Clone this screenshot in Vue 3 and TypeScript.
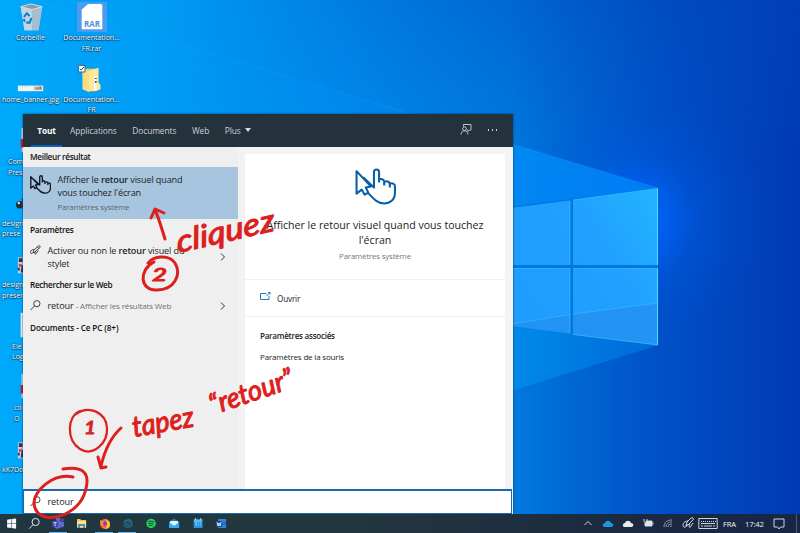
<script setup lang="ts">
interface DesktopItem {
  kind: string
  lines: string[]
  indent: number
}

const files: DesktopItem[] = [
  { kind: 'pdf', lines: ['Com', 'Pres'], indent: 8 },
  { kind: 'ball', lines: ['design', 'prese'], indent: 2 },
  { kind: 'photo', lines: ['design', 'préser'], indent: 2 },
  { kind: 'page', lines: ['Ele', 'Log'], indent: 12 },
  { kind: 'pdf', lines: ['co', 'O'], indent: 14 },
  { kind: 'photo', lines: ['kK7Do'], indent: 2 },
]
const tabs: string[] = ['Applications', 'Documents', 'Web']
</script>

<template>
  <main class="desktop">
    <svg class="wallpaper" viewBox="0 0 800 533" preserveAspectRatio="none">
      <defs>
        <linearGradient id="base" x1="0" y1="0" x2="1" y2="0">
          <stop offset="0" stop-color="#00a7fa" />
          <stop offset=".2" stop-color="#009cf4" />
          <stop offset=".42" stop-color="#008cee" />
          <stop offset=".64" stop-color="#007adf" />
          <stop offset=".72" stop-color="#0066d3" />
          <stop offset=".83" stop-color="#004fc7" />
          <stop offset="1" stop-color="#003ab5" />
        </linearGradient>
        <linearGradient id="topShade" x1="0" y1="0" x2="0" y2="1">
          <stop offset="0" stop-color="#0046b8" stop-opacity=".36" />
          <stop offset="1" stop-color="#0050c8" stop-opacity="0" />
        </linearGradient>
        <linearGradient id="fadeLeft" x1="0" y1="0" x2="1" y2="0">
          <stop offset=".2" stop-color="#fff" stop-opacity="0" />
          <stop offset=".65" stop-color="#fff" stop-opacity="1" />
        </linearGradient>
        <mask id="rightOnly"><rect width="800" height="533" fill="url(#fadeLeft)" /></mask>
        <radialGradient id="glow" gradientUnits="userSpaceOnUse" cx="635" cy="220" r="130">
          <stop offset="0" stop-color="#006aff" />
          <stop offset=".25" stop-color="#0062f8" stop-opacity=".75" />
          <stop offset=".5" stop-color="#005ae6" stop-opacity=".32" />
          <stop offset="1" stop-color="#0050d0" stop-opacity="0" />
        </radialGradient>
        <linearGradient id="beam" gradientUnits="userSpaceOnUse" x1="0" y1="0" x2="658" y2="0">
          <stop offset="0" stop-color="#00adff" stop-opacity=".4" />
          <stop offset=".35" stop-color="#0096f4" stop-opacity=".15" />
          <stop offset=".6" stop-color="#0090fa" stop-opacity=".25" />
          <stop offset=".8" stop-color="#008efc" stop-opacity=".75" />
          <stop offset="1" stop-color="#0082f6" stop-opacity=".85" />
        </linearGradient>
        <linearGradient id="under" gradientUnits="userSpaceOnUse" x1="512" y1="0" x2="658" y2="0">
          <stop offset="0" stop-color="#008aea" />
          <stop offset="1" stop-color="#0068d8" />
        </linearGradient>
        <linearGradient id="pane" gradientUnits="userSpaceOnUse" x1="512" y1="300" x2="658" y2="210">
          <stop offset="0" stop-color="#1e9dff" />
          <stop offset=".6" stop-color="#21a0ff" />
          <stop offset="1" stop-color="#22b2ff" />
        </linearGradient>
      </defs>
      <rect width="800" height="533" fill="url(#base)" />
      <rect width="800" height="170" fill="url(#topShade)" mask="url(#rightOnly)" />
      <rect x="500" y="90" width="300" height="270" fill="url(#glow)" />
      <path d="M0-10 658 188V345L430 415 0 533Z" fill="url(#beam)" />
      <path d="M0-10 658 188" stroke="#41b7ff" stroke-opacity=".16" fill="none" />
      <path d="M505 325 658 345 505 393Z" fill="url(#under)" />
      <path d="M505 207 658 188V345L505 325Z" fill="#0077e2" />
      <path d="M505 208.500 570 200.500V265H505ZM573 200 658 188.500V265H573ZM505 268.500H570V333.500L505 325ZM573 268.500H658V345L573 334.500Z" fill="url(#pane)" />
      <path d="M505 325 570 314.500V333.500ZM573 314 658 303V345L573 334.500Z" fill="#248fef" fill-opacity=".72" />
      <path d="M505 325 570 314.500M573 314 658 303" stroke="#31b4ff" fill="none" stroke-opacity=".8" />
      <path d="M573 200 657.500 188.500V265M570 200.500V265M505 268.500H570M573 268.500H657.500V345L573 334.500M570 268.500V333.500" stroke="#42c7ff" stroke-width="1" fill="none" stroke-opacity=".6" />
      <path d="M657.500 188.500V265M657.500 268.500V345" stroke="#4be0ff" fill="none" />
    </svg>

    <section class="icons">
      <div class="shortcut">
        <svg class="pic" viewBox="0 0 32 32">
          <path d="M5 5 16 2 28 5 24 30H9Z" fill="#a8c9dd" />
          <path d="M5 5 17 8 17 30H9Z" fill="#c0d6e4" />
          <path d="M17 8 28 5 24 30H17Z" fill="#a3bfd0" />
          <path d="M5 5 16 2 28 5 17 8Z" fill="#879cab" stroke="#d3e0e8" />
          <path d="m8.500 16 3-4 3 3M16.500 17l-2 5h-3.500M9.500 21l-1.500-3" fill="none" stroke="#147dcb" stroke-width="2.200" />
        </svg>
        <span class="name">Corbeille</span>
      </div>
      <div class="shortcut">
        <svg class="pic selected" viewBox="0 0 32 32">
          <path d="M5 8 12 2H25Q27 2 27 4V29H5Z" fill="#fff" />
          <text x="16" y="26.500" text-anchor="middle" class="rar">RAR</text>
        </svg>
        <span class="name">Documentation...<br>FR.rar</span>
      </div>
      <div class="shortcut">
        <svg class="pic" viewBox="0 0 32 32">
          <path d="M2 23H29V29H2Z" fill="#f4f4ef" /><path d="M19 24H28V28H19Z" fill="#c8b8a8" />
          <path d="M22 25h2v2h-2zM25 24h2v3h-2z" fill="#8d7a72" /><path d="M3 24h12v1H3z" fill="#d8e0e3" />
        </svg>
        <span class="name">home_banner.jpg</span>
      </div>
      <div class="shortcut">
        <svg class="pic" viewBox="0 0 32 32">
          <path d="M6 5H22V26L12 29 6 27Z" fill="#f0cd62" /><path d="M11 8 23 4V20L25 22V27L20 29H11Z" fill="#ffe89a" />
          <path d="M6 5 13 8V30L6 27Z" fill="#f9dc83" /><path d="M18 12H21V28H18Z" fill="#f6f6f0" />
          <path d="M19 15h2v1h-2zm0 3h2v2h-2z" fill="#454c52" />
          <path d="M1.500 1.500H8.500V8.500H1.500Z" fill="#fff" stroke="#25668c" /><path d="m3 5 1.500 1.500L7.500 3" fill="none" stroke="#333" />
        </svg>
        <span class="name">Documentation...<br>FR</span>
      </div>
      <template v-for="(file, i) in files" :key="i">
        <div class="shortcut cut">
          <svg class="pic" viewBox="0 0 32 32">
            <g v-if="file.kind === 'pdf'"><path d="M6 3H28V29H6Z" fill="#f4f4f4" /><path d="M5 15H28V24H5Z" fill="#d1142a" /></g>
            <g v-else-if="file.kind === 'ball'"><circle cx="4" cy="19" r="4" fill="#252b33" /><circle cx="3" cy="17" r="1.300" fill="#dce6ed" /><path d="M6 12h5v12H7z" fill="#25465f" /></g>
            <g v-else-if="file.kind === 'photo'"><path d="M2 10H28V27H2Z" fill="#d2cdd8" /><path d="M3 11h4v4H3zm3 7h3v8H5zM2 21h2v3H2z" fill="#2c315f" /><path d="M3 17h3v3H3z" fill="#b94c58" /></g>
            <g v-else><path d="M5 3H28V29H5Z" fill="#f5f5f5" /><path d="M7 7h1v1H7zm0 10h1v1H7z" fill="#999" /></g>
          </svg>
          <span class="name" :style="{ paddingLeft: file.indent + 'px' }"><template v-for="(line, n) in file.lines" :key="n">{{ line }}<br></template></span>
        </div>
        <i></i>
      </template>
    </section>

    <section class="search-window">
      <header class="tabs">
        <b class="tab active">Tout</b>
        <span v-for="tab in tabs" :key="tab" class="tab">{{ tab }}</span>
        <span class="tab more">Plus <i class="caret"></i></span>
        <svg class="feedback" viewBox="0 0 12 12"><path d="M3.500 3V1H11V6.500H9.500L8 8V6.500H7" /><circle cx="4.500" cy="5.300" r="1.900" /><path d="M1 11c.3-5 6.500-5 7 0" /></svg>
        <span class="dots"><i></i><i></i><i></i></span>
      </header>
      <div class="body">
        <div class="results">
          <h3 class="h-first">Meilleur résultat</h3>
          <div class="best">
            <svg class="touch" viewBox="0 0 40 36"><path d="M1.500 3V25L6.500 21 9.500 26 13 24 10.500 19 15.500 18ZM8 9 18.500 19V4C18.500 .5 23.500 .5 23.500 4V14M23.500 11.500C25 10 28.500 11 28.500 13.500V17M28.500 14C30 12 34 13 34 16V19M34 15.500C36 14 39 15.500 39 18V24C39 31 34 34.500 28.500 34.500C22 34.500 19 31 12.500 24" /></svg>
            <div class="best-copy"><p>Afficher le <b>retour</b> visuel quand<br>vous touchez l'écran</p><small>Paramètres système</small></div>
          </div>
          <h3 class="h-settings">Paramètres</h3>
          <div class="row two">
            <svg class="glyph" viewBox="0 0 12 12"><path d="M4 6 9 1C10.500 0 12 2 10.500 3L5 8 3.500 8ZM5 5c-4-1-5 3-4 4s3-1 3-2M6 7c-2 3 0 4 1 2l2-3M8 2l2 2" /></svg>
            <p>Activer ou non le <b>retour</b> visuel du<br>stylet</p><svg class="chev" viewBox="0 0 6 8"><path d="m1 .5 3.500 3.500L1 7.500" /></svg>
          </div>
          <h3 class="h-web">Rechercher sur le Web</h3>
          <div class="row one">
            <svg class="glyph" viewBox="0 0 12 12"><circle cx="7.500" cy="4" r="3.400" /><path d="M5 6.500.5 11" /></svg>
            <p>retour <em>- Afficher les résultats Web</em></p><svg class="chev" viewBox="0 0 6 8"><path d="m1 .5 3.500 3.500L1 7.500" /></svg>
          </div>
          <h3 class="h-docs">Documents - Ce PC (8+)</h3>
        </div>
        <article class="preview">
          <div class="hero">
            <svg class="touch big" viewBox="0 0 40 36"><path d="M1.500 3V25L6.500 21 9.500 26 13 24 10.500 19 15.500 18ZM8 9 18.500 19V4C18.500 .5 23.500 .5 23.500 4V14M23.500 11.500C25 10 28.500 11 28.500 13.500V17M28.500 14C30 12 34 13 34 16V19M34 15.500C36 14 39 15.500 39 18V24C39 31 34 34.500 28.500 34.500C22 34.500 19 31 12.500 24" /></svg>
            <h2>Afficher le retour visuel quand vous touchez<br>l'écran</h2>
            <small>Paramètres système</small>
          </div>
          <div class="open"><svg viewBox="0 0 11 9"><path d="M6.500 1.500H.5V7.500H9V4M6.500 4 10 .5M8 .5h2v2" /></svg><span>Ouvrir</span></div>
          <div class="related"><b>Paramètres associés</b><span>Paramètres de la souris</span></div>
        </article>
      </div>
      <div class="searchbox"><svg class="glyph" viewBox="0 0 12 12"><circle cx="7.500" cy="4" r="3.400" /><path d="M5 6.500.5 11" /></svg><span>retour</span></div>
    </section>

    <footer class="taskbar">
      <svg class="t" viewBox="0 0 23 19"><path d="m7 5.700 4-.6v4.200H7zm4.500-.7 4.500-.6v4.900h-4.500zM7 9.800h4V14l-4-.6zm4.500 0H16v4.900l-4.500-.6z" fill="#f4f8fa" /></svg>
      <svg class="t" viewBox="0 0 23 19"><circle cx="12.500" cy="8" r="3.600" fill="none" stroke="#e1e8ea" /><path d="m10 10.700-4 4" stroke="#e1e8ea" /></svg>
      <svg class="t run" viewBox="0 0 23 19"><path d="M7 7h8v5c0 3-7 4-7 0zM14 8h4v3c0 2-2 3-4 2" fill="#6468cc" /><circle cx="12" cy="5" r="2.300" fill="#6468cc" /><circle cx="16.300" cy="6" r="1.500" fill="#4e53bd" /><path d="M6 7h6v6H6z" fill="#414ab7" /><path d="M7.500 8.500h3M9 8.500v3.500" stroke="#c9cdf2" /></svg>
      <svg class="t" viewBox="0 0 23 19"><path d="M7 5h3l1 1h5v8H7z" fill="#f5bd45" /><path d="M7 7h9v6H7z" fill="#ffe393" /><path d="M8 10h7v4h-2v-2h-3v2H8z" fill="#408fc8" /></svg>
      <svg class="t run" viewBox="0 0 23 19"><circle cx="12" cy="10" r="5" fill="#ff6540" /><path d="M11 4c1 2 6 2 6 7 0 3-3 4-5 4 3-3 3-7-1-11" fill="#ffc52d" /><circle cx="11.500" cy="9.500" r="2.300" fill="#7549bc" /><path d="m7 6 4 2-2 1 2 2c-2 1-4-1-4-5" fill="#ff9b2f" /></svg>
      <svg class="t run" viewBox="0 0 23 19"><circle cx="12" cy="9.500" r="5" fill="#23495a" /><circle cx="12" cy="9.500" r="4.200" fill="none" stroke="#24708c" stroke-dasharray="5 1.500" /><path d="M9 8c2-3 6-1 6 2M9 11c2-3 4 1 4 2" stroke="#2b7791" fill="none" /></svg>
      <svg class="t" viewBox="0 0 23 19"><circle cx="12" cy="9.500" r="4.700" fill="#25d465" /><path d="M9 7.500q3-1 6 .5M9.300 9.600q2.700-.8 5.200.5M9.600 11.500q2-.6 4 .4" stroke="#173c35" fill="none" /></svg>
      <svg class="t" viewBox="0 0 23 19"><path d="M7 8 12 4.500 17 8V14H7Z" fill="#1684d0" /><path d="M8 7h8v3l-4 2-4-2z" fill="#edf6fb" /><path d="m7 8 5 4 5-4v6H7z" fill="#32aef0" /></svg>
      <svg class="t" viewBox="0 0 23 19"><path d="M7.500 5H16.500V14H7.500Z" fill="#2693df" /><path d="M8 7h8M9.500 4v2M14.500 4v2M9 9h2m1 0h1m1 0h1M9 11h2m1 0h1m1 0h1" stroke="#c3ebff" stroke-width=".8" /></svg>
      <svg class="t" viewBox="0 0 23 19"><path d="M9 5h8v9H9z" fill="#2d87d6" /><path d="M9 8h8v3H9z" fill="#2869bd" /><path d="M7 7h6v6H7z" fill="#164ca5" /><path d="m8 8 1 4 1-3 1 3 1-4" stroke="#fff" fill="none" stroke-width=".8" /></svg>
      <div class="tray">
        <svg viewBox="0 0 20 19"><path d="m6.500 11 3.500-3.500 3.500 3.500" /></svg>
        <svg viewBox="0 0 20 19"><path class="cloud blue" d="M6 13c-2-1-1-4 1-4 1-3 5-3 6 0 3 0 3 4 0 4z" /></svg>
        <svg viewBox="0 0 20 19"><path class="cloud" d="M6 13c-2-1-1-4 1-4 1-3 5-3 6 0 3 0 3 4 0 4z" /></svg>
        <svg viewBox="0 0 20 19"><path d="M8 7h6v5H7V9M15 8.500v2" fill="#dce4ed" /><path d="M6 5v2c0 2 3 2 3 0V5M7.500 8v4" /></svg>
        <svg viewBox="0 0 20 19"><path class="dim" d="M6 13c0-5 3-7 8-7M8 13c0-3 2-5 6-5M10 13c0-2 1-3 4-3M12 13c0-1 1-1 2-1" /></svg>
        <svg viewBox="0 0 20 19"><path d="m9 8 4-4c2-1 3 1 2 2l-5 5-2 1zm1-1c-5 0-6 5-4 6s3-2 3-3M12 10c-2 3 0 5 1 2l2-3" /></svg>
        <svg viewBox="0 0 20 19"><path d="M.8 4.500H19.200V14.500H.8ZM3 7.500h1m1 0h1m1 0h1m1 0h1m1 0h1m1 0h1m1 0h1m1 0h1M3 9.500h14M3 12h2m1 0h8m1 0h2" /></svg>
        <span class="lang">FRA</span><span class="clock">17:42</span>
        <svg class="note" viewBox="0 0 20 19"><path d="M5 5H15V13H11.500L10 15 8.500 13H5Z" /></svg><i class="peek"></i>
      </div>
    </footer>

    <svg class="ink" viewBox="0 0 800 533">
      <g class="stroke">
        <path d="M165 239C162 230 159 218 155 210M151 218 155 209 164 213" />
        <path d="M154 262C138 270 140 291 157 290C174 290 182 275 175 263C169 254 153 256 148 263" />
        <path class="thin" d="M80 411C67 416 66 440 80 449C93 457 108 443 107 428C106 412 89 405 76 414" />
        <path d="M121 428C112 436 105 449 101 466M98 457 101 468 106 467" />
        <path d="M73 477C53 473 33 491 34 504C37 527 75 518 84 495C92 473 84 466 63 469" />
      </g>
      <g class="hand">
        <text transform="translate(178 253) rotate(-13) skewX(-6)" font-size="31" textLength="100" lengthAdjust="spacingAndGlyphs">cliquez</text>
        <text transform="translate(134 437) rotate(-10)" font-size="29" textLength="62" lengthAdjust="spacingAndGlyphs">tapez</text>
        <text transform="translate(213 415) rotate(-19)" font-size="28" textLength="87" lengthAdjust="spacingAndGlyphs">“retour”</text>
        <text x="152" y="281" font-size="17" textLength="15" lengthAdjust="spacingAndGlyphs">2</text>
        <text x="84" y="434" font-size="17" textLength="12" lengthAdjust="spacingAndGlyphs">1</text>
      </g>
    </svg>
  </main>
</template>

<style>
body { overflow: hidden; }
</style>

<style scoped>
.desktop { position: relative; width: 800px; height: 533px; display: flex; flex-direction: column; justify-content: space-between; overflow: hidden; font-family: "Open Sans", "Noto Sans", sans-serif; color: #1d1d1d; font-size: 9px; }
.desktop * { box-sizing: border-box; }
svg { display: block; flex: none; }
p, h2, h3 { margin: 0; }
.wallpaper, .ink { position: absolute; inset: 0; width: 800px; height: 533px; pointer-events: none; }
.ink { z-index: 4; }
.icons { position: relative; display: grid; grid-template-columns: 61px 61px; grid-auto-rows: 61.500px; width: 122px; height: 514px; overflow: hidden; }
.shortcut { display: flex; flex-direction: column; align-items: center; padding-top: 2px; color: #fff; }
.pic { width: 30px; height: 30px; }
.selected { background: #4b9cee; }
.name { font-size: 7px; line-height: 10.500px; text-align: center; white-space: nowrap; padding-top: 1px; text-shadow: 0 1px 1px #003c66, 0 0 2px #00466f, 0 0 1px #00466f; }
.cut .name { align-self: flex-start; text-align: left; padding-top: 2px; }
.rar { font: 700 8.500px "Open Sans", sans-serif; fill: #4c94d5; }
.search-window { position: absolute; z-index: 2; left: 23px; top: 114px; width: 489.500px; height: 400px; display: flex; flex-direction: column; background: #f4f4f4; box-shadow: 0 0 2px #00396f; }
.tabs { height: 33px; background: #24323c; color: #ccd1d4; display: flex; align-items: stretch; padding-left: 8px; }
.tab { display: flex; align-items: center; font-size: 8.400px; letter-spacing: -.08px; margin-right: 15.500px; padding-bottom: 1px; white-space: nowrap; }
.tab.active { width: 31px; justify-content: center; border-bottom: 2px solid #0a64b8; padding-top: 1px; padding-bottom: 0; margin-right: 8px; color: #fff; font-size: 8.400px; letter-spacing: -.2px; }
.tab.more { margin: 0; gap: 4px; }
.caret { border: 3.500px solid transparent; border-top: 4px solid #d5dade; border-bottom: 0; }
.feedback { width: 12px; height: 31px; margin: 0 16px 0 auto; fill: none; stroke: #cbd2d5; stroke-width: .9; }
.dots { display: flex; gap: 2.500px; align-items: center; margin-right: 15.500px; padding-bottom: 1px; }
.dots i { width: 1.500px; height: 1.500px; background: #ccd4d7; }
.body { display: flex; height: 342px; }
.results { width: 222px; background: #efefef; border-right: 7px solid #f2f2f2; }
h3 { display: flex; align-items: center; padding: 0 0 1px 7px; font-size: 8.200px; letter-spacing: -.26px; font-weight: 600; color: #111; white-space: nowrap; }
.h-first { height: 20px; letter-spacing: -.3px; }
.h-settings { height: 22px; }
.h-web { height: 21px; padding-bottom: 2px; letter-spacing: -.3px; }
.h-docs { height: 21px; padding-bottom: 2px; letter-spacing: -.12px; }
.best { height: 52px; background: #a8c5df; display: flex; padding: 7px 0 0 7px; }
.touch { width: 21px; height: 19px; margin-top: 1px; fill: none; stroke: #101820; stroke-width: 2.600; stroke-linejoin: round; }
.best-copy { margin-left: 6.500px; white-space: nowrap; }
.best p, .row p { font-size: 9.100px; letter-spacing: -.14px; line-height: 12.500px; }
.best b, .row b { font-weight: 600; }
.best small { display: block; font-size: 7.800px; letter-spacing: -.14px; line-height: 12px; color: #566574; margin-top: 2px; }
.row { display: flex; padding-left: 7px; }
.row.two { height: 34px; padding-top: 4px; }
.row.one { height: 22px; padding-top: 4px; }
.row p { width: 172px; white-space: nowrap; margin-left: 6.500px; }
em { font-style: normal; color: #707070; font-size: 8px; }
.glyph { width: 11px; height: 11px; fill: none; stroke: #202020; stroke-width: .9; }
.chev { width: 6px; height: 8px; fill: none; stroke: #333; margin-top: 2px; }
.two .chev { margin-top: 8px; }
.row .chev { margin-left: auto; margin-right: 12.500px; }
.preview { width: 260px; margin-top: 7px; background: #fff; }
.hero { height: 126px; display: flex; flex-direction: column; align-items: center; border-bottom: 1.500px solid #f1f1f1; }
.touch.big { width: 41px; height: 37px; margin: 14px 0 0; stroke: #0a5ea8; stroke-width: 2; }
h2 { font-size: 10.600px; line-height: 15px; font-weight: 400; text-align: center; white-space: nowrap; margin-top: 13px; }
.hero small { font-size: 7.800px; letter-spacing: -.14px; color: #777; line-height: 12px; margin-top: 2px; }
.open { height: 37px; display: flex; align-items: center; gap: 6px; padding-left: 15px; border-bottom: 1px solid #f1f1f1; font-size: 8.200px; letter-spacing: -.2px; }
.open svg { width: 11px; height: 9px; fill: none; stroke: #247ab9; margin-top: -3px; }
.related { display: flex; flex-direction: column; gap: 9px; padding: 13px 0 0 15px; font-size: 8px; letter-spacing: -.18px; line-height: 12px; }
.related b { font-weight: 600; font-size: 8.100px; letter-spacing: -.28px; }
.searchbox { height: 25px; width: 489px; background: #fff; border: 1px solid #1c69ad; border-top-width: 2px; display: flex; align-items: center; gap: 6.500px; padding: 0 0 1px 6px; font-size: 9.100px; letter-spacing: -.14px; }
.taskbar { position: relative; z-index: 3; height: 19px; display: flex; background: linear-gradient(90deg, #20373f, #22363f 45%, #1c2b40 75%, #182545); color: #eef3f6; }
.t { width: 23.200px; height: 19px; }
.run { background: linear-gradient(#73b7e8, #73b7e8) 2.500px 100% / 18px 1.500px no-repeat; }
.tray { margin-left: auto; display: flex; align-items: center; }
.tray svg { width: 20px; height: 19px; fill: none; stroke: #dfe6ec; stroke-width: .9; }
.tray .cloud { fill: #e7ecef; stroke: none; }
.tray .blue { fill: #2095e4; }
.tray .dim { stroke: #94a4b2; }
.lang { font-size: 7.600px; letter-spacing: -.2px; width: 18px; margin-left: 5px; }
.clock { font-size: 7.800px; letter-spacing: -.2px; width: 22px; margin-left: 4px; }
.tray .note { margin-left: 2px; margin-right: 7px; }
.peek { width: 4px; height: 19px; border-left: 1px solid #4b5b70; }
.stroke { fill: none; stroke: #dd1f1d; stroke-width: 3; stroke-linecap: round; stroke-linejoin: round; }
.thin { stroke-width: 2.200; }
.hand { font-family: Lato, sans-serif; font-style: italic; fill: #dd1f1d; stroke: #dd1f1d; stroke-width: 1.100; stroke-linejoin: round; }
</style>
